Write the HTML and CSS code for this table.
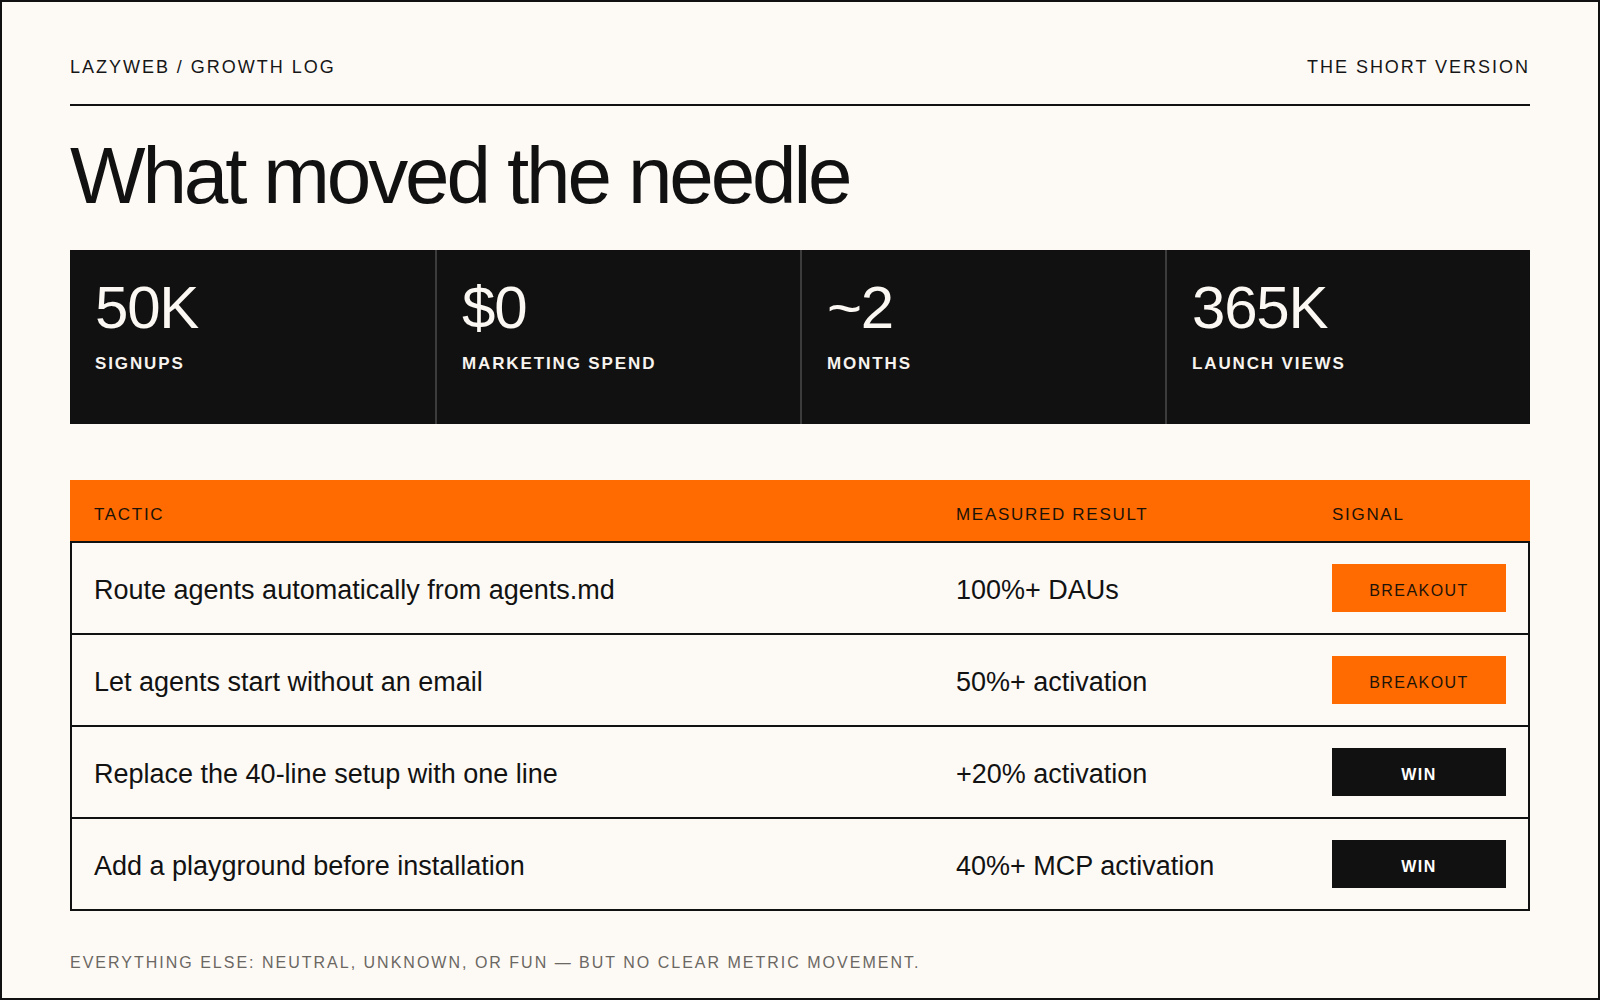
FILE: index.html
```html
<!DOCTYPE html>
<html lang="en">
<head>
<meta charset="utf-8">
<title>What moved the needle</title>
<link rel="stylesheet" href="styles.css">
</head>
<body>
<div class="page">
  <header class="topbar">
    <span class="eyebrow">LAZYWEB / GROWTH LOG</span>
    <span class="eyebrow">THE SHORT VERSION</span>
  </header>

  <h1 class="title">What moved the needle</h1>

  <section class="stats">
    <div class="stat">
      <div class="stat-value">50K</div>
      <div class="stat-label">SIGNUPS</div>
    </div>
    <div class="stat">
      <div class="stat-value">$0</div>
      <div class="stat-label">MARKETING SPEND</div>
    </div>
    <div class="stat">
      <div class="stat-value">~2</div>
      <div class="stat-label">MONTHS</div>
    </div>
    <div class="stat">
      <div class="stat-value">365K</div>
      <div class="stat-label">LAUNCH VIEWS</div>
    </div>
  </section>

  <section class="table">
    <div class="thead">
      <div class="th">TACTIC</div>
      <div class="th">MEASURED RESULT</div>
      <div class="th">SIGNAL</div>
    </div>
    <div class="tbody">
      <div class="row">
        <div class="cell">Route agents automatically from agents.md</div>
        <div class="cell">100%+ DAUs</div>
        <div class="cell"><span class="badge badge-breakout">BREAKOUT</span></div>
      </div>
      <div class="row">
        <div class="cell">Let agents start without an email</div>
        <div class="cell">50%+ activation</div>
        <div class="cell"><span class="badge badge-breakout">BREAKOUT</span></div>
      </div>
      <div class="row">
        <div class="cell">Replace the 40-line setup with one line</div>
        <div class="cell">+20% activation</div>
        <div class="cell"><span class="badge badge-win">WIN</span></div>
      </div>
      <div class="row">
        <div class="cell">Add a playground before installation</div>
        <div class="cell">40%+ MCP activation</div>
        <div class="cell"><span class="badge badge-win">WIN</span></div>
      </div>
    </div>
  </section>

  <p class="footnote">EVERYTHING ELSE: NEUTRAL, UNKNOWN, OR FUN — BUT NO CLEAR METRIC MOVEMENT.</p>
</div>
</body>
</html>
```

FILE: styles.css
```css
* {
  box-sizing: border-box;
}

html, body {
  margin: 0;
  padding: 0;
  background: #fdfaf6;
}

body {
  font-family: "Liberation Sans", Arial, Helvetica, sans-serif;
  color: #111111;
}

.page {
  width: 1600px;
  height: 1000px;
  border: 2px solid #111111;
  padding: 56px 68px 0 68px;
  background: #fdfaf6;
  display: flex;
  flex-direction: column;
}

.topbar {
  display: flex;
  justify-content: space-between;
  align-items: flex-start;
  padding-bottom: 28px;
  border-bottom: 2px solid #111111;
}

.eyebrow {
  font-size: 18px;
  line-height: 1;
  letter-spacing: 0.11em;
  color: #161616;
}

.title {
  margin: 30px 0 0 0;
  font-size: 80px;
  line-height: 1;
  font-weight: 400;
  letter-spacing: -0.039em;
  color: #111111;
}

.stats {
  margin-top: 34px;
  height: 174px;
  background: #111111;
  display: grid;
  grid-template-columns: repeat(4, 1fr);
}

.stat {
  padding: 28px 25px 0 25px;
}

.stat + .stat {
  border-left: 2px solid #3c3c3c;
}

.stat-value {
  font-size: 60px;
  line-height: 1;
  letter-spacing: -0.02em;
  color: #fbf7f2;
}

.stat-label {
  margin-top: 16px;
  font-size: 17px;
  line-height: 1.2;
  font-weight: 700;
  letter-spacing: 0.11em;
  color: #f7f3ee;
}

.table {
  margin-top: 56px;
}

.thead {
  height: 61px;
  background: #ff6b00;
  padding: 25px 24px 0 24px;
  display: grid;
  grid-template-columns: 862px 376px 174px;
}

.th {
  font-size: 17px;
  line-height: 1.2;
  letter-spacing: 0.1em;
  color: #1b1208;
}

.tbody {
  border: 2px solid #111111;
}

.row {
  height: 92px;
  padding: 0 22px;
  display: grid;
  grid-template-columns: 862px 376px 174px;
  align-items: center;
}

.row + .row {
  border-top: 2px solid #111111;
}

.row:first-child {
  height: 90px;
}

.cell {
  font-size: 27px;
  line-height: 1.2;
  padding-top: 4px;
  color: #121212;
}

.cell:last-child {
  padding-top: 0;
}

.badge {
  display: flex;
  align-items: center;
  justify-content: center;
  width: 174px;
  height: 48px;
  padding-top: 5px;
  font-size: 16px;
  letter-spacing: 0.09em;
}

.badge-breakout {
  background: #ff6b00;
  color: #1e1308;
}

.badge-win {
  background: #111111;
  color: #ffffff;
  font-weight: 700;
}

.footnote {
  margin: 44px 0 0 0;
  font-size: 16px;
  line-height: 1;
  letter-spacing: 0.125em;
  color: #6b6762;
}
```
